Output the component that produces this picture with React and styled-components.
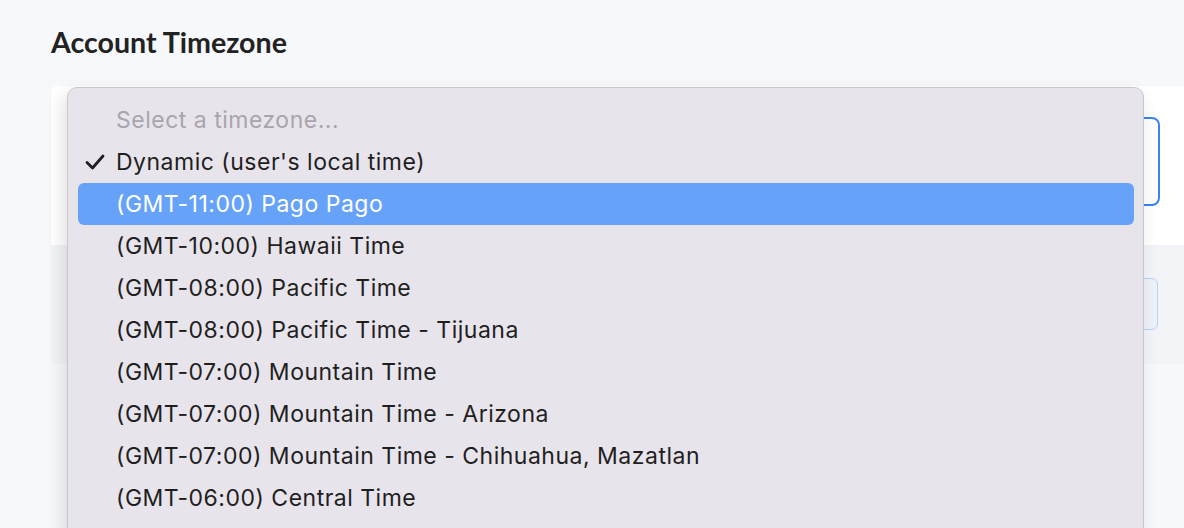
import React from 'react'
import styled, { createGlobalStyle } from 'styled-components'

const GlobalStyle = createGlobalStyle`
  html, body {
    margin: 0;
    padding: 0;
    background: #f7f8fb;
    overflow: hidden;
  }
  #root {
    height: 528px;
  }
`

const Page = styled.div`
  position: relative;
  height: 528px;
  padding: 24px 0 0 51px;
  box-sizing: border-box;
  font-family: Lato, sans-serif;
  overflow: hidden;
`

const Title = styled.h2`
  margin: 0 0 26px;
  font-size: 28.6px;
  font-weight: 700;
  color: #222;
  line-height: 36px;
`

const Card = styled.div`
  background: #fff;
  border-radius: 6px 0 0 6px;
  box-shadow: 0 1px 2px rgba(0, 0, 0, 0.04);
  overflow: hidden;
`

const Top = styled.div`
  height: 159px;
  display: flex;
  justify-content: flex-end;
  align-items: flex-start;
  padding: 31px 24px 0 0;
  box-sizing: border-box;
`

const SelectBox = styled.div`
  width: 400px;
  height: 89px;
  border: 2px solid #3b82f6;
  border-radius: 8px;
  box-sizing: border-box;
`

const Bottom = styled.div`
  height: 117px;
  background: #f3f4f7;
  display: flex;
  justify-content: flex-end;
  align-items: flex-start;
  padding: 33px 26px 0 0;
  box-sizing: border-box;
`

const GhostButton = styled.div`
  width: 200px;
  height: 52px;
  border: 1px solid #b9d3f5;
  border-radius: 6px;
  background: #eef2f8;
  box-sizing: border-box;
`

const Menu = styled.ul`
  position: absolute;
  left: 67px;
  top: 87px;
  width: 1077px;
  height: 480px;
  margin: 0;
  padding: 11px 9px 10px 10px;
  box-sizing: border-box;
  list-style: none;
  background: #e8e4eb;
  border: 1px solid #c9c7cc;
  border-radius: 10px;
  box-shadow: -4px 6px 18px rgba(0, 0, 0, 0.12);
  font-family: Inter, 'Open Sans', sans-serif;
  font-size: 23px;
  letter-spacing: 0.5px;
`

const Option = styled.li`
  position: relative;
  height: 42px;
  display: flex;
  align-items: center;
  padding-left: 38px;
  border-radius: 6px;
  color: ${p => (p.$placeholder ? '#a9a5ac' : p.$active ? '#fff' : '#1f1f1f')};
  background: ${p => (p.$active ? '#67a2f9' : 'transparent')};
`

const Check = styled.svg`
  position: absolute;
  left: 6px;
  top: 12px;
  width: 22px;
  height: 18px;
`

const options = [
  '(GMT-11:00) Pago Pago',
  '(GMT-10:00) Hawaii Time',
  '(GMT-08:00) Pacific Time',
  '(GMT-08:00) Pacific Time - Tijuana',
  '(GMT-07:00) Mountain Time',
  '(GMT-07:00) Mountain Time - Arizona',
  '(GMT-07:00) Mountain Time - Chihuahua, Mazatlan',
  '(GMT-06:00) Central Time',
]

export default function App() {
  return (
    <>
      <GlobalStyle />
      <Page>
        <Title>Account Timezone</Title>
        <Card>
          <Top>
            <SelectBox />
          </Top>
          <Bottom>
            <GhostButton />
          </Bottom>
        </Card>
        <Menu>
          <Option $placeholder>Select a timezone...</Option>
          <Option>
            <Check viewBox="0 0 22 18">
              <path d="M3 9.5 L8.5 15 L19 3" fill="none" stroke="#1f1f1f" strokeWidth="2.8" strokeLinecap="round" strokeLinejoin="round" />
            </Check>
            Dynamic (user's local time)
          </Option>
          {options.map((o, i) => (
            <Option key={i} $active={i === 0}>{o}</Option>
          ))}
        </Menu>
      </Page>
    </>
  )
}
